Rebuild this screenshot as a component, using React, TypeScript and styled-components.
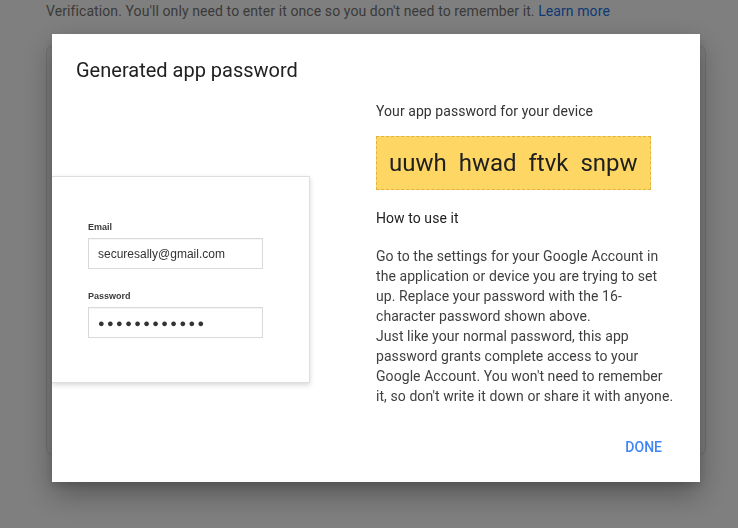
import { createGlobalStyle, styled } from "styled-components";

const GlobalStyle = createGlobalStyle`
  html, body {
    margin: 0;
    padding: 0;
    background: #ffffff;
    font-family: Roboto, "Noto Sans", Arial, sans-serif;
    overflow: hidden;
  }
`;

const Page = styled.div`
  width: 738px;
  height: 528px;
  box-sizing: border-box;
  padding: 1px 0 0 46px;
`;

const PageText = styled.p`
  margin: 0;
  font-size: 14px;
  line-height: 20px;
  letter-spacing: 0.09px;
  color: #757575;
  white-space: nowrap;
`;

const PageLink = styled.a`
  color: #1a73e8;
  text-decoration: none;
`;

const PageCard = styled.div`
  margin-top: 24px;
  width: 660px;
  height: 411px;
  box-sizing: border-box;
  border: 1px solid #e0e0e0;
  border-radius: 8px;
`;

const Overlay = styled.div`
  position: fixed;
  inset: 0;
  background: rgba(0, 0, 0, 0.5);
  display: flex;
  align-items: flex-start;
  justify-content: flex-start;
  padding: 34px 0 0 52px;
`;

const Dialog = styled.div`
  width: 648px;
  height: 448px;
  box-sizing: border-box;
  background: #ffffff;
  box-shadow: 0 12px 28px rgba(0, 0, 0, 0.32), 0 4px 8px rgba(0, 0, 0, 0.12);
  padding: 24px 22px 17px 24px;
  display: flex;
  flex-direction: column;
  overflow: hidden;
`;

const Title = styled.h2`
  margin: 0;
  font-size: 20px;
  line-height: 24px;
  font-weight: 400;
  color: #212121;
`;

const Body = styled.div`
  display: flex;
  margin-top: 19px;
  margin-left: -24px;
`;

const IllustrationCol = styled.div`
  width: 324px;
  flex-shrink: 0;
`;

const LoginCard = styled.div`
  margin-top: 75px;
  width: 258px;
  box-sizing: border-box;
  padding: 44px 46px 44px 36px;
  background: #ffffff;
  border: 1px solid #dedede;
  border-left: none;
  box-shadow: 0 2px 5px rgba(0, 0, 0, 0.16);
  font-family: "Liberation Sans", Arial, sans-serif;
`;

const FieldLabel = styled.div<{ $gap?: number }>`
  margin-top: ${(p) => p.$gap ?? 0}px;
  font-size: 9px;
  line-height: 12px;
  font-weight: 700;
  color: #3a3a3a;
`;

const FieldBox = styled.div`
  margin-top: 5px;
  width: 175px;
  height: 31px;
  box-sizing: border-box;
  border: 1px solid #d9d9d9;
  box-shadow: inset 0 1px 1px rgba(0, 0, 0, 0.04);
  padding: 0 9px;
  display: flex;
  align-items: center;
  font-size: 12px;
  color: #333333;
`;

const Dots = styled.span`
  font-size: 11px;
  letter-spacing: 2.4px;
  color: #333333;
`;

const InfoCol = styled.div`
  width: 300px;
  color: #3c3c3c;
  font-size: 14px;
  line-height: 20px;
  letter-spacing: 0.07px;
`;

const Label = styled.div<{ $strong?: boolean }>`
  color: ${(p) => (p.$strong ? "#212121" : "#333333")};
`;

const PasswordBox = styled.div`
  display: inline-block;
  margin-top: 15px;
  padding: 12px;
  background: #fdd663;
  border: 1px dashed #e0b43c;
  font-size: 24px;
  line-height: 28px;
  letter-spacing: 0;
  word-spacing: 6px;
  color: #202020;
`;

const Section = styled.div<{ $gap: number }>`
  margin-top: ${(p) => p.$gap}px;
`;

const Paragraph = styled.p`
  margin: 18px 0 0;
  color: #3f3f3f;
`;

const Footer = styled.div`
  margin-top: auto;
  display: flex;
  justify-content: flex-end;
`;

const TextButton = styled.button`
  height: 36px;
  padding: 0 16px;
  border: none;
  background: transparent;
  font-family: Roboto, Arial, sans-serif;
  font-size: 14px;
  font-weight: 500;
  color: #4285f4;
  text-transform: uppercase;
  cursor: pointer;
`;

export default function App() {
  return (
    <>
      <GlobalStyle />
      <Page>
        <PageText>
          Verification. You'll only need to enter it once so you don't need to
          remember it. <PageLink href="#">Learn more</PageLink>
        </PageText>
        <PageCard />
      </Page>
      <Overlay>
        <Dialog>
          <Title>Generated app password</Title>
          <Body>
            <IllustrationCol>
              <LoginCard>
                <FieldLabel>Email</FieldLabel>
                <FieldBox>securesally@gmail.com</FieldBox>
                <FieldLabel $gap={21}>Password</FieldLabel>
                <FieldBox>
                  <Dots>●●●●●●●●●●●●</Dots>
                </FieldBox>
              </LoginCard>
            </IllustrationCol>
            <InfoCol>
              <Label>Your app password for your device</Label>
              <PasswordBox>uuwh hwad ftvk snpw</PasswordBox>
              <Section $gap={18}>
                <Label $strong>How to use it</Label>
              </Section>
              <Paragraph>
                Go to the settings for your Google Account in the application or
                device you are trying to set up. Replace your password with the
                16-character password shown above.
                <br />
                Just like your normal password, this app password grants
                complete access to your Google Account. You won't need to
                remember it, so don't write it down or share it with anyone.
              </Paragraph>
            </InfoCol>
          </Body>
          <Footer>
            <TextButton>Done</TextButton>
          </Footer>
        </Dialog>
      </Overlay>
    </>
  );
}
